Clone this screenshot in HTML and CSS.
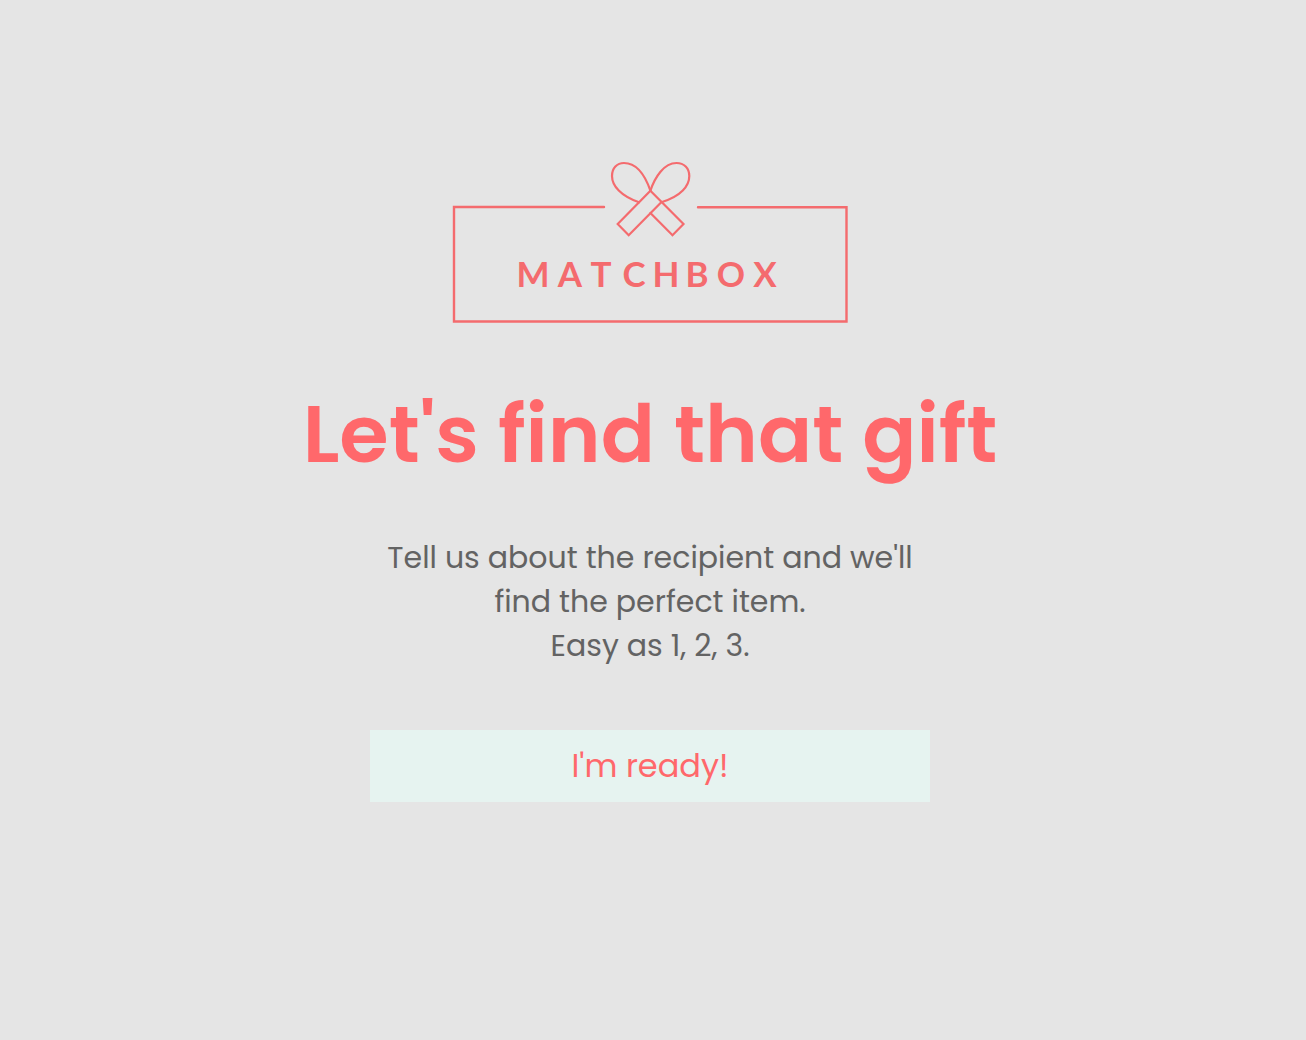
FILE: index.html
```html
<!DOCTYPE html>
<html lang="en">
<head>
<meta charset="utf-8">
<meta name="viewport" content="width=device-width, initial-scale=1">
<title>Matchbox</title>
<link rel="stylesheet" href="styles.css">
</head>
<body>
<main class="welcome">
  <svg class="logo" viewBox="0 0 400 164" role="img" aria-label="Matchbox">
    <g class="logo-frame">
      <path d="M154 47H4V161.500H396.500V47.200H248"/>
    </g>
    <g class="logo-bow">
      <path d="M189 42.300C171 36 162 26 162 16C162 8 167 3 174 3C188 3 196 18 200.400 30.700"/>
      <path d="M212 42C231 36 239.300 26 239.300 16C239.300 8 234 3 226.500 3C214 3 205 17 200.400 30.700"/>
      <path d="M200.400 30.700L167.700 64L178.700 75.300L211.500 42"/>
      <path d="M200.400 30.700L233.500 64L222.500 75.200L200.400 53"/>
    </g>
    <text class="logo-name" x="83 120 151 184 216 247 281 315" y="127">MATCHBOX</text>
  </svg>
  <h1 class="title">Let's find that gift</h1>
  <p class="intro">Tell us about the recipient and we'll find the perfect item.<br>Easy as 1, 2, 3.</p>
  <button class="start" type="button">I'm ready!</button>
</main>
</body>
</html>
```
FILE: styles.css
```css
body {
  margin: 0;
  background: #e5e5e5;
  color: #636363;
  font-family: Poppins, Inter, sans-serif;
}

.welcome {
  display: flex;
  flex-direction: column;
  align-items: center;
  padding: 160px 6px 80px 0;
}

.logo {
  width: 400px;
  max-width: 100%;
}

.logo-frame,
.logo-bow {
  fill: none;
  stroke: #f46b6e;
  stroke-width: 2.4;
  stroke-linecap: round;
}

.logo-bow {
  stroke-width: 2.2;
}

.logo-name {
  fill: #f46b6e;
  font-family: Lato, sans-serif;
  font-size: 35px;
  font-weight: 700;
  text-anchor: middle;
}

.title {
  margin: 50px 0 42px;
  color: #ff686b;
  font-size: 80px;
  font-weight: 600;
  line-height: 120px;
  text-align: center;
}

.intro {
  max-width: 560px;
  margin: 0;
  font-size: 30px;
  line-height: 44px;
  text-align: center;
}

.start {
  width: 560px;
  max-width: 100%;
  height: 72px;
  margin-top: 62px;
  border: 0;
  background: #e6f3f0;
  color: #ff686b;
  font: inherit;
  font-size: 32px;
  cursor: pointer;
}
```
